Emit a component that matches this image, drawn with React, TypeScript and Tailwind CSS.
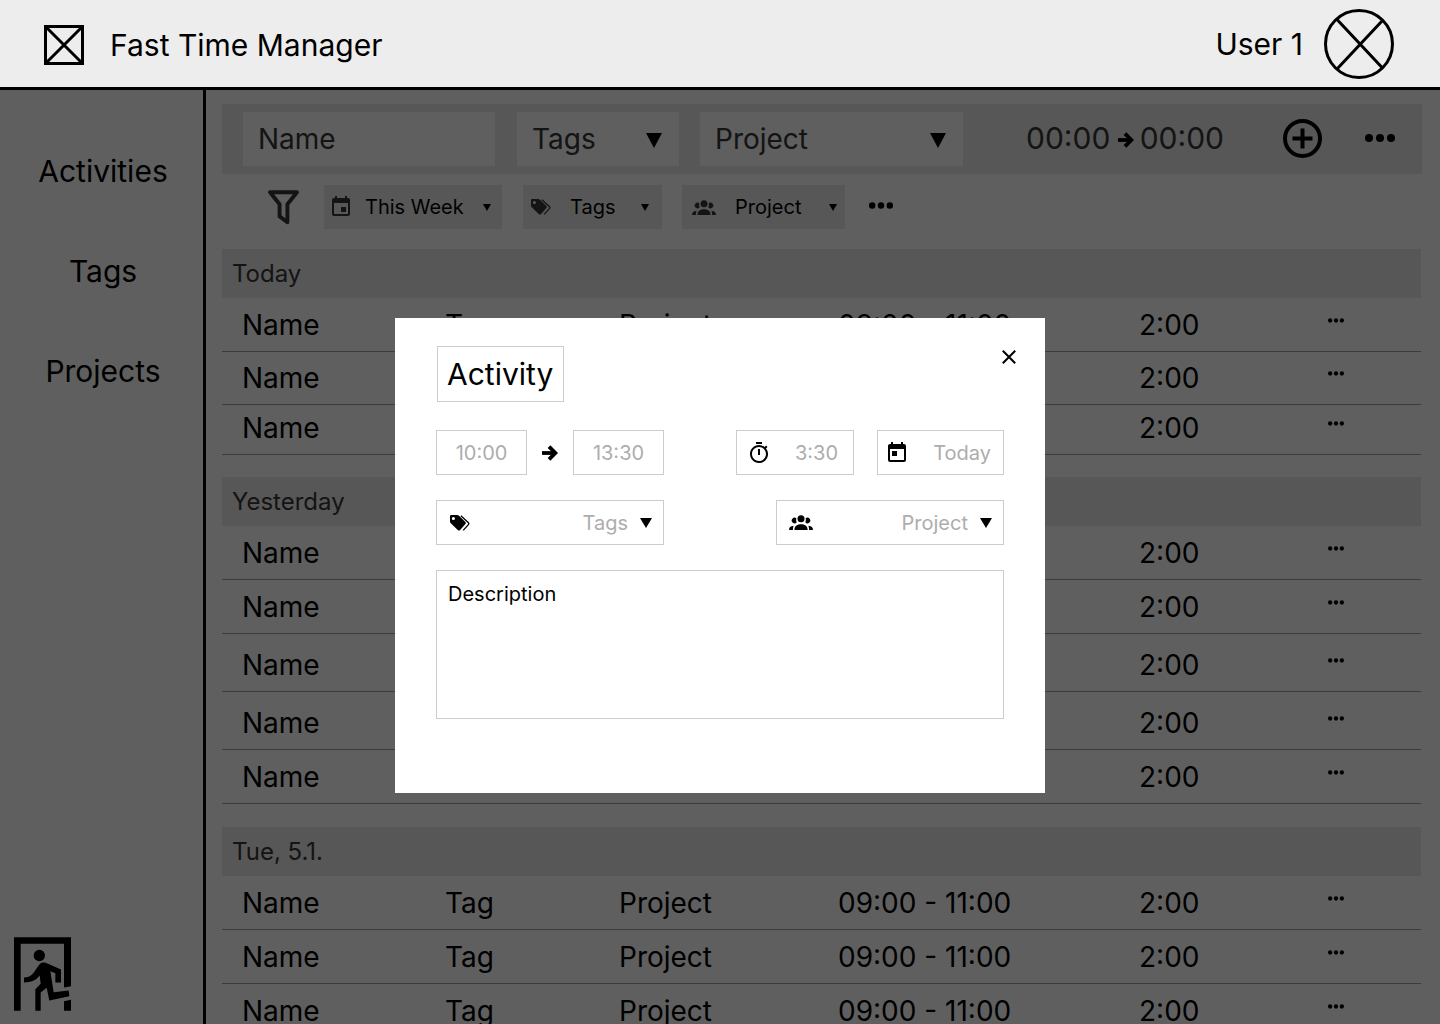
import React from 'react';
import { MdEvent, MdToday, MdOutlineTimer } from 'react-icons/md';

type IconProps = { className?: string };

function CrossBox() {
  return (
    <svg className="size-10" viewBox="0 0 40 40" fill="none" stroke="black" strokeWidth="3" aria-hidden="true">
      <rect x="1.5" y="1.5" width="37" height="37" />
      <path d="M3 3 37 37M37 3 3 37" />
    </svg>
  );
}

function Avatar() {
  return (
    <svg className="size-[70px]" viewBox="0 0 70 70" fill="none" stroke="black" strokeWidth="3" aria-hidden="true">
      <circle cx="35" cy="35" r="33.5" />
      <path d="M13 10.5 58.5 59M58.5 11.5 13 60" />
    </svg>
  );
}

function Triangle({ className }: IconProps) {
  return (
    <svg className={className} viewBox="0 0 16 14" preserveAspectRatio="none" aria-hidden="true">
      <path d="M0 0H16L8 14Z" />
    </svg>
  );
}

function Dots({ className }: IconProps) {
  return (
    <svg className={className} viewBox="0 0 30 8" aria-hidden="true">
      <circle cx="4" cy="4" r="4" />
      <circle cx="15" cy="4" r="4" />
      <circle cx="26" cy="4" r="4" />
    </svg>
  );
}

function Arrow() {
  return (
    <svg className="h-4 w-4 shrink-0" viewBox="0 0 16 16" fill="none" stroke="black" aria-label="to">
      <path d="M0 8H13" strokeWidth="3.8" />
      <path d="M7 1.6 13.4 8 7 14.4" strokeWidth="3.8" />
    </svg>
  );
}

function Funnel() {
  return (
    <svg className="h-[35px] w-[31px]" viewBox="0 0 31 35" fill="none" stroke="#323232" strokeWidth="3.9" strokeLinejoin="round" aria-hidden="true">
      <path d="M2 2.2H29L19.4 14.2V32.2L11.6 26.4V14.2Z" />
    </svg>
  );
}

function TagsIcon({ className }: IconProps) {
  return (
    <svg className={className} viewBox="0 0 20 16" aria-hidden="true">
      <path fillRule="evenodd" fill="currentColor" d="M1 0H7.2Q8.2 0 9 .7L15.4 7Q16.4 8 15.4 9L9.9 15.2Q9 16 8 15.2L.8 8.2Q0 7.4 0 6.4V1Q0 0 1 0ZM3.4 1.9A1.6 1.6 0 1 0 3.4 5.1 1.6 1.6 0 1 0 3.4 1.9Z" />
      <path d="M10.9.7 18.2 7.4Q19.4 8.5 18.4 9.6L13.2 15.4" fill="none" stroke="currentColor" strokeWidth="1.3" />
    </svg>
  );
}

function PeopleIcon({ className }: IconProps) {
  return (
    <svg className={className} viewBox="0 0 24 15" fill="currentColor" aria-hidden="true">
      <circle cx="12" cy="3.8" r="3.5" />
      <path d="M7.3 3.1A2.9 2.9 0 1 0 7.6 7.6Q6.8 5.6 7.3 3.1ZM16.7 3.1A2.9 2.9 0 1 1 16.4 7.6Q17.2 5.6 16.7 3.1Z" />
      <path d="M5.4 15C5.4 10.9 8.6 9.3 12 9.3S18.6 10.9 18.6 15Z" />
      <path d="M0 15C0 12.6 1.2 11 4.6 10.7Q3.9 12.4 3.9 15ZM24 15C24 12.6 22.8 11 19.4 10.7Q20.1 12.4 20.1 15Z" />
    </svg>
  );
}

function ExitIcon() {
  return (
    <svg className="h-[74px] w-[57px]" viewBox="42 51 171 221" aria-hidden="true">
      <path d="M42 51H213V198L192 202V71H62V272H42ZM192 243 213 239V272H192Z" />
      <circle cx="118" cy="106" r="17" />
      <path d="M72 172C94 171 101 158 112 141Q121 126 131 127Q134 127 137 128L183 148V187H166V159L151 153L161 216L206 211L208 228L148 241L140 203L122 217V272H106V207L122 191L119 166Q104 187 72 187Z" />
    </svg>
  );
}

function FieldSelect({ label, className }: { label: string; className: string }) {
  return (
    <div className={`relative ${className}`}>
      <select aria-label={label} className="h-[54px] w-full appearance-none bg-[#ededed] px-[15px] text-[28px] text-[#323232]">
        <option>{label}</option>
      </select>
      <Triangle className="pointer-events-none absolute top-[21px] right-[17px] h-[15px] w-4" />
    </div>
  );
}

type FilterSelectProps = { label: string; icon: React.ReactNode; className: string; pad: string; arrow: string };

function FilterSelect({ label, icon, className, pad, arrow }: FilterSelectProps) {
  return (
    <div className={`relative ${className}`}>
      <select aria-label={`Filter by ${label}`} className={`h-11 w-full appearance-none bg-[#d9d9d9] text-xl ${pad}`}>
        <option>{label}</option>
      </select>
      <span className="pointer-events-none absolute inset-y-0 left-0 flex items-center text-[#323232]">{icon}</span>
      <Triangle className={`pointer-events-none absolute top-[19px] h-[7px] w-2 ${arrow}`} />
    </div>
  );
}

function ModalSelect({ label, icon }: { label: string; icon: React.ReactNode }) {
  return (
    <div className="relative w-[228px]">
      <select aria-label={label} className="h-[45px] w-full appearance-none border border-[#cccccc] bg-white pr-[35px] text-right text-xl text-[#adadad] [text-align-last:right]">
        <option>{label}</option>
      </select>
      <span className="pointer-events-none absolute inset-y-0 left-3 flex items-center">{icon}</span>
      <Triangle className="pointer-events-none absolute top-[18px] right-3 h-2.5 w-3" />
    </div>
  );
}

const modalInput = 'h-[45px] border border-[#cccccc] bg-white text-xl text-[#adadad]';

const groups = [
  { title: 'Today', spacing: 'mt-5', rows: ['h-[54px]', 'h-[53px]', 'h-[50px]'] },
  { title: 'Yesterday', spacing: 'mt-[22px]', rows: ['h-[54px]', 'h-[54px]', 'h-[58px]', 'h-[58px]', 'h-[54px]'] },
  { title: 'Tue, 5.1.', spacing: 'mt-[23px]', rows: ['h-[54px]', 'h-[54px]', 'h-[54px]'] },
];

const cell = 'border-b border-[#969696] pb-1.5 pl-5';

function ActivityGroup({ title, spacing, rows }: { title: string; spacing: string; rows: string[] }) {
  return (
    <section className={`mr-px ${spacing}`}>
      <h2 className="flex h-[49px] items-center bg-[#d9d9d9] px-2.5 text-2xl text-[#323232]">{title}</h2>
      <table aria-label={title} className="w-full table-fixed border-separate border-spacing-0 text-left text-[28px] leading-10">
        <colgroup>
          <col className="w-[203px]" />
          <col className="w-[174px]" />
          <col className="w-[219px]" />
          <col className="w-[301px]" />
          <col className="w-[189px]" />
          <col className="w-[113px]" />
        </colgroup>
        <tbody>
          {rows.map((height, i) => (
            <tr key={i} className={`align-bottom whitespace-nowrap ${height}`}>
              <td className={cell}>Name</td>
              <td className={cell}>Tag</td>
              <td className={cell}>Project</td>
              <td className={cell}>09:00 - 11:00</td>
              <td className={cell}>2:00</td>
              <td className="border-b border-[#969696] pb-7 pl-5">
                <button aria-label="Row actions" className="block">
                  <Dots className="h-[5px] w-4" />
                </button>
              </td>
            </tr>
          ))}
        </tbody>
      </table>
    </section>
  );
}

function ActivityDialog() {
  return (
    <div role="dialog" aria-label="Activity" className="flex w-[650px] flex-col bg-white px-[41px] pt-7 pb-[74px]">
      <div className="flex items-start justify-between">
        <input aria-label="Activity name" defaultValue="Activity" className="ml-px h-14 w-[127px] border border-[#cccccc] px-[9px] text-3xl" />
        <button aria-label="Close" className="-mr-3 pt-1">
          <svg className="size-3.5" viewBox="0 0 14 14" fill="none" stroke="black" strokeWidth="2">
            <path d="M.8.8 13.2 13.2M13.2.8.8 13.2" />
          </svg>
        </button>
      </div>
      <div className="mt-7 flex items-center">
        <input aria-label="Start" defaultValue="10:00" className={`${modalInput} w-[91px] text-center`} />
        <span className="mx-auto"><Arrow /></span>
        <input aria-label="End" defaultValue="13:30" className={`${modalInput} w-[91px] text-center`} />
        <div className="relative ml-[72px]">
          <input aria-label="Duration" defaultValue="3:30" className={`${modalInput} w-[118px] pr-[15px] text-right`} />
          <MdOutlineTimer className="pointer-events-none absolute top-[11px] left-[11px] size-6" />
        </div>
        <div className="relative ml-[23px]">
          <input aria-label="Date" defaultValue="Today" className={`${modalInput} w-[127px] pr-3 text-right`} />
          <MdToday className="pointer-events-none absolute top-[11px] left-2 size-6" />
        </div>
      </div>
      <div className="mt-[25px] flex justify-between">
        <ModalSelect label="Tags" icon={<TagsIcon className="ml-0.5 h-4 w-5" />} />
        <ModalSelect label="Project" icon={<PeopleIcon className="ml-px h-[15px] w-6" />} />
      </div>
      <textarea aria-label="Description" defaultValue="Description" className="mt-[25px] h-[149px] resize-none border border-[#cccccc] px-[11px] py-2 text-xl leading-[30px]" />
    </div>
  );
}

export default function App() {
  return (
    <div className="flex h-screen flex-col overflow-hidden bg-[#ededed] font-['Inter',sans-serif] text-black">
      <header className="flex h-[90px] shrink-0 items-center justify-between border-b-[3px] border-black pr-[46px] pl-11">
        <div className="flex items-center gap-[26px] pt-[3px]">
          <CrossBox />
          <h1 className="text-3xl">Fast Time Manager</h1>
        </div>
        <div className="flex items-center gap-[21px]">
          <span className="text-3xl">User 1</span>
          <button aria-label="User menu">
            <Avatar />
          </button>
        </div>
      </header>

      <div className="relative flex min-h-0 flex-1">
        <aside className="flex w-[206px] shrink-0 flex-col justify-between border-r-[3px] border-black pb-[13px]">
          <nav className="flex flex-col items-center gap-[60px] pt-[61px] pl-[3px] text-3xl leading-10">
            <a href="#activities">Activities</a>
            <a href="#tags">Tags</a>
            <a href="#projects">Projects</a>
          </nav>
          <button aria-label="Log out" className="ml-3.5 self-start">
            <ExitIcon />
          </button>
        </aside>

        <main className="flex min-w-0 flex-1 flex-col pt-3.5 pr-[18px] pl-4">
          <form className="flex h-[70px] shrink-0 items-center bg-[#d9d9d9] pr-[27px] pl-[21px] text-[28px] text-[#323232]">
            <input aria-label="Name" defaultValue="Name" className="h-[54px] min-w-0 flex-1 bg-[#ededed] px-[15px]" />
            <FieldSelect label="Tags" className="ml-[22px] w-[162px]" />
            <FieldSelect label="Project" className="ml-[21px] w-[263px]" />
            <div className="ml-[63px] flex w-[198px] items-center justify-between pb-0.5 text-3xl">
              <span>00:00</span>
              <span className="pt-1 pl-0.5"><Arrow /></span>
              <span>00:00</span>
            </div>
            <button type="button" aria-label="Add activity" className="ml-[59px] pb-px">
              <svg className="size-[39px]" viewBox="0 0 39 39" fill="none" stroke="black" strokeWidth="4">
                <circle cx="19.5" cy="19.5" r="17.5" />
                <path d="M9.5 19.5H29.5M19.5 9.5V29.5" />
              </svg>
            </button>
            <button type="button" aria-label="More options" className="ml-[43px] pb-0.5">
              <Dots className="h-2 w-[30px] fill-black" />
            </button>
          </form>

          <div className="mt-[11px] flex shrink-0 items-center pl-[46px]">
            <Funnel />
            <FilterSelect label="This Week" className="ml-[25px] w-[178px]" pad="pl-[41px]" arrow="right-[11px]" icon={<MdEvent className="ml-[5px] size-6" />} />
            <FilterSelect label="Tags" className="ml-[21px] w-[139px]" pad="pl-[47px]" arrow="right-[13px]" icon={<TagsIcon className="ml-2 h-4 w-5" />} />
            <FilterSelect label="Project" className="ml-5 w-[163px]" pad="pl-[53px]" arrow="right-2" icon={<PeopleIcon className="ml-2.5 h-[15px] w-6" />} />
            <button aria-label="More filters" className="ml-6 pb-1">
              <Dots className="h-[7px] w-6" />
            </button>
          </div>

          {groups.map((group) => (
            <ActivityGroup key={group.title} title={group.title} spacing={group.spacing} rows={group.rows} />
          ))}
        </main>

        <div className="absolute inset-0 flex items-start justify-center bg-black/60 pt-[228px]">
          <ActivityDialog />
        </div>
      </div>
    </div>
  );
}
